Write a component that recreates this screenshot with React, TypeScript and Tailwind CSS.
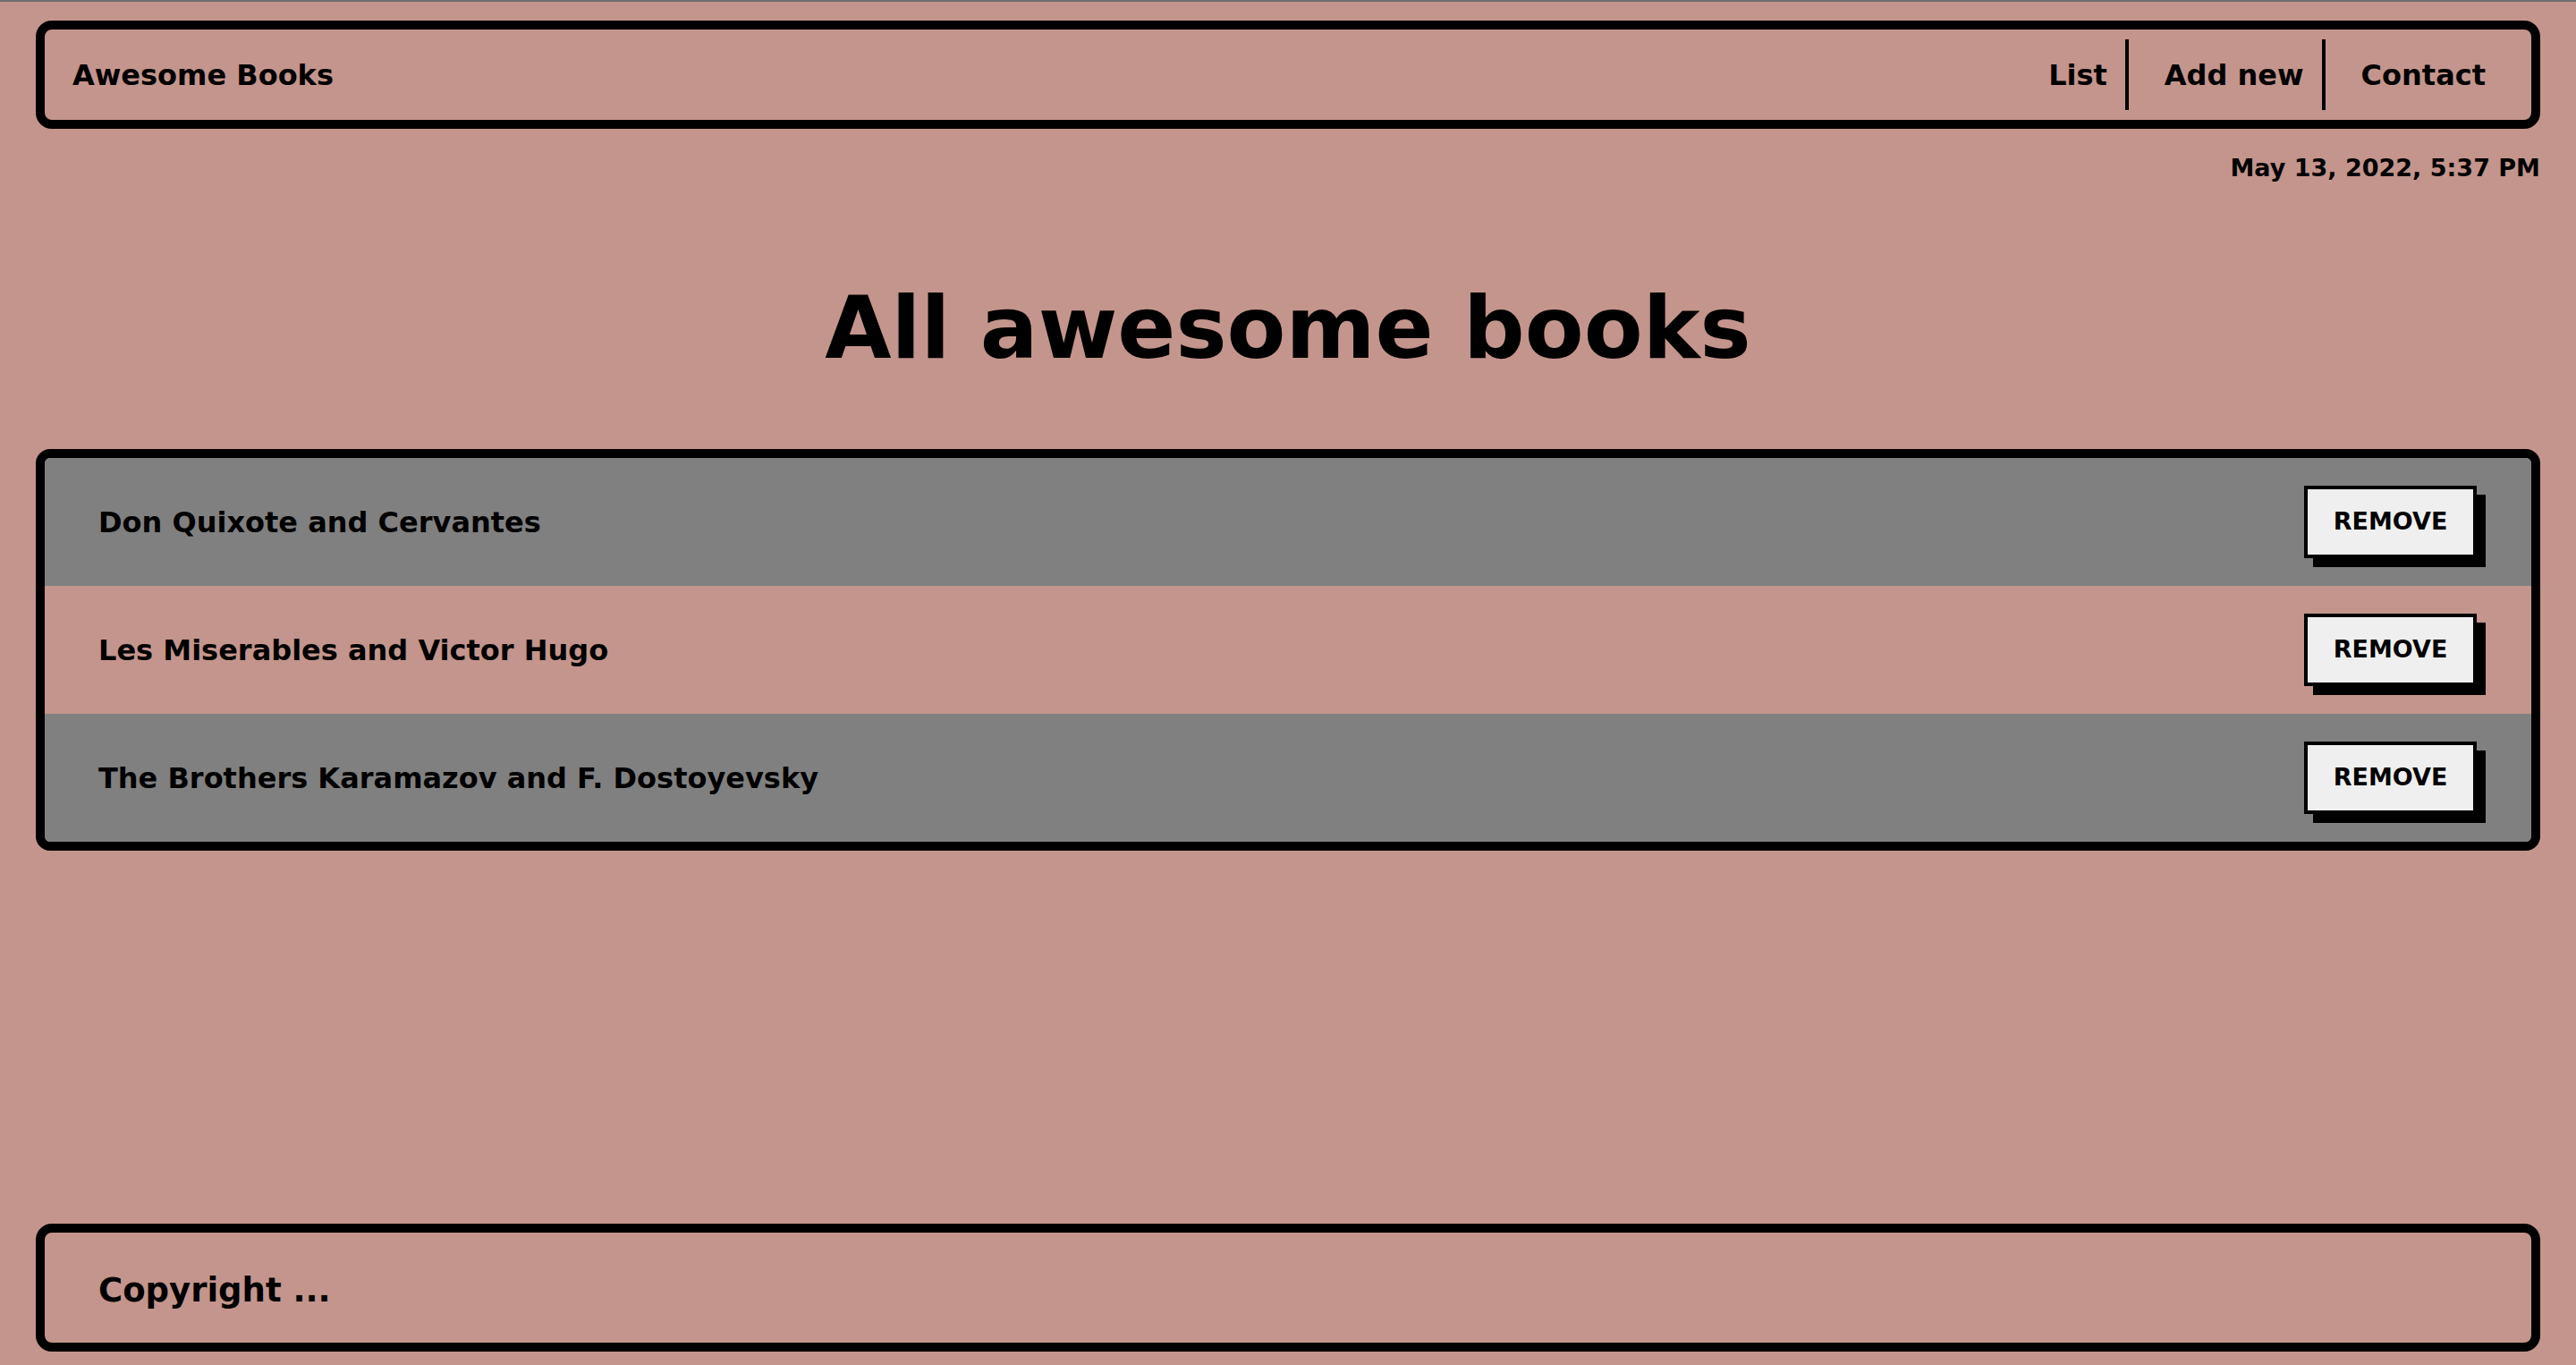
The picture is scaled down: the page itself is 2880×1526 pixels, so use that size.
const books = [
  { title: "Don Quixote", author: "Cervantes" },
  { title: "Les Miserables", author: "Victor Hugo" },
  { title: "The Brothers Karamazov", author: "F. Dostoyevsky" },
];

export default function App() {
  return (
    <div className="min-h-screen flex flex-col bg-[#c4958c] border-t-2 border-[#6e6e6e] px-[40px] pb-[15px] font-['DejaVu_Sans',sans-serif] font-bold text-black">
      <header className="mt-[21px] h-[121px] border-[10px] border-black rounded-[18px] flex items-center justify-between pl-[31px] pr-[51px]">
        <span className="text-[32px]">Awesome Books</span>
        <ul className="flex items-center text-[32px]">
          <li className="h-[79px] flex items-center pr-[20px] border-r-4 border-black">List</li>
          <li className="h-[79px] flex items-center pl-[40px] pr-[20px] border-r-4 border-black">Add new</li>
          <li className="h-[79px] flex items-center pl-[40px]">Contact</li>
        </ul>
      </header>

      <p className="mt-[28px] text-right text-[27px] leading-[32px]">May 13, 2022, 5:37 PM</p>

      <h1 className="mt-[106px] text-center text-[96px] leading-[115px]">All awesome books</h1>

      <ul className="mt-[77px] border-[10px] border-black rounded-[16px] overflow-hidden">
        {books.map((b, i) => (
          <li
            key={b.title}
            className={
              "h-[143px] flex items-center justify-between pl-[60px] pr-[61px] " +
              (i % 2 === 0 ? "bg-[#808080]" : "bg-[#c4958c]")
            }
          >
            <span className="text-[32px]">
              {b.title} and {b.author}
            </span>
            <button className="w-[193px] h-[81px] border-4 border-black bg-[#efefef] text-[27px] shadow-[10px_10px_0_#000]">
              REMOVE
            </button>
          </li>
        ))}
      </ul>

      <footer className="mt-auto h-[143px] border-[10px] border-black rounded-[18px] flex items-center pl-[60px] pt-[6px]">
        <span className="text-[37px]">Copyright ...</span>
      </footer>
    </div>
  );
}
